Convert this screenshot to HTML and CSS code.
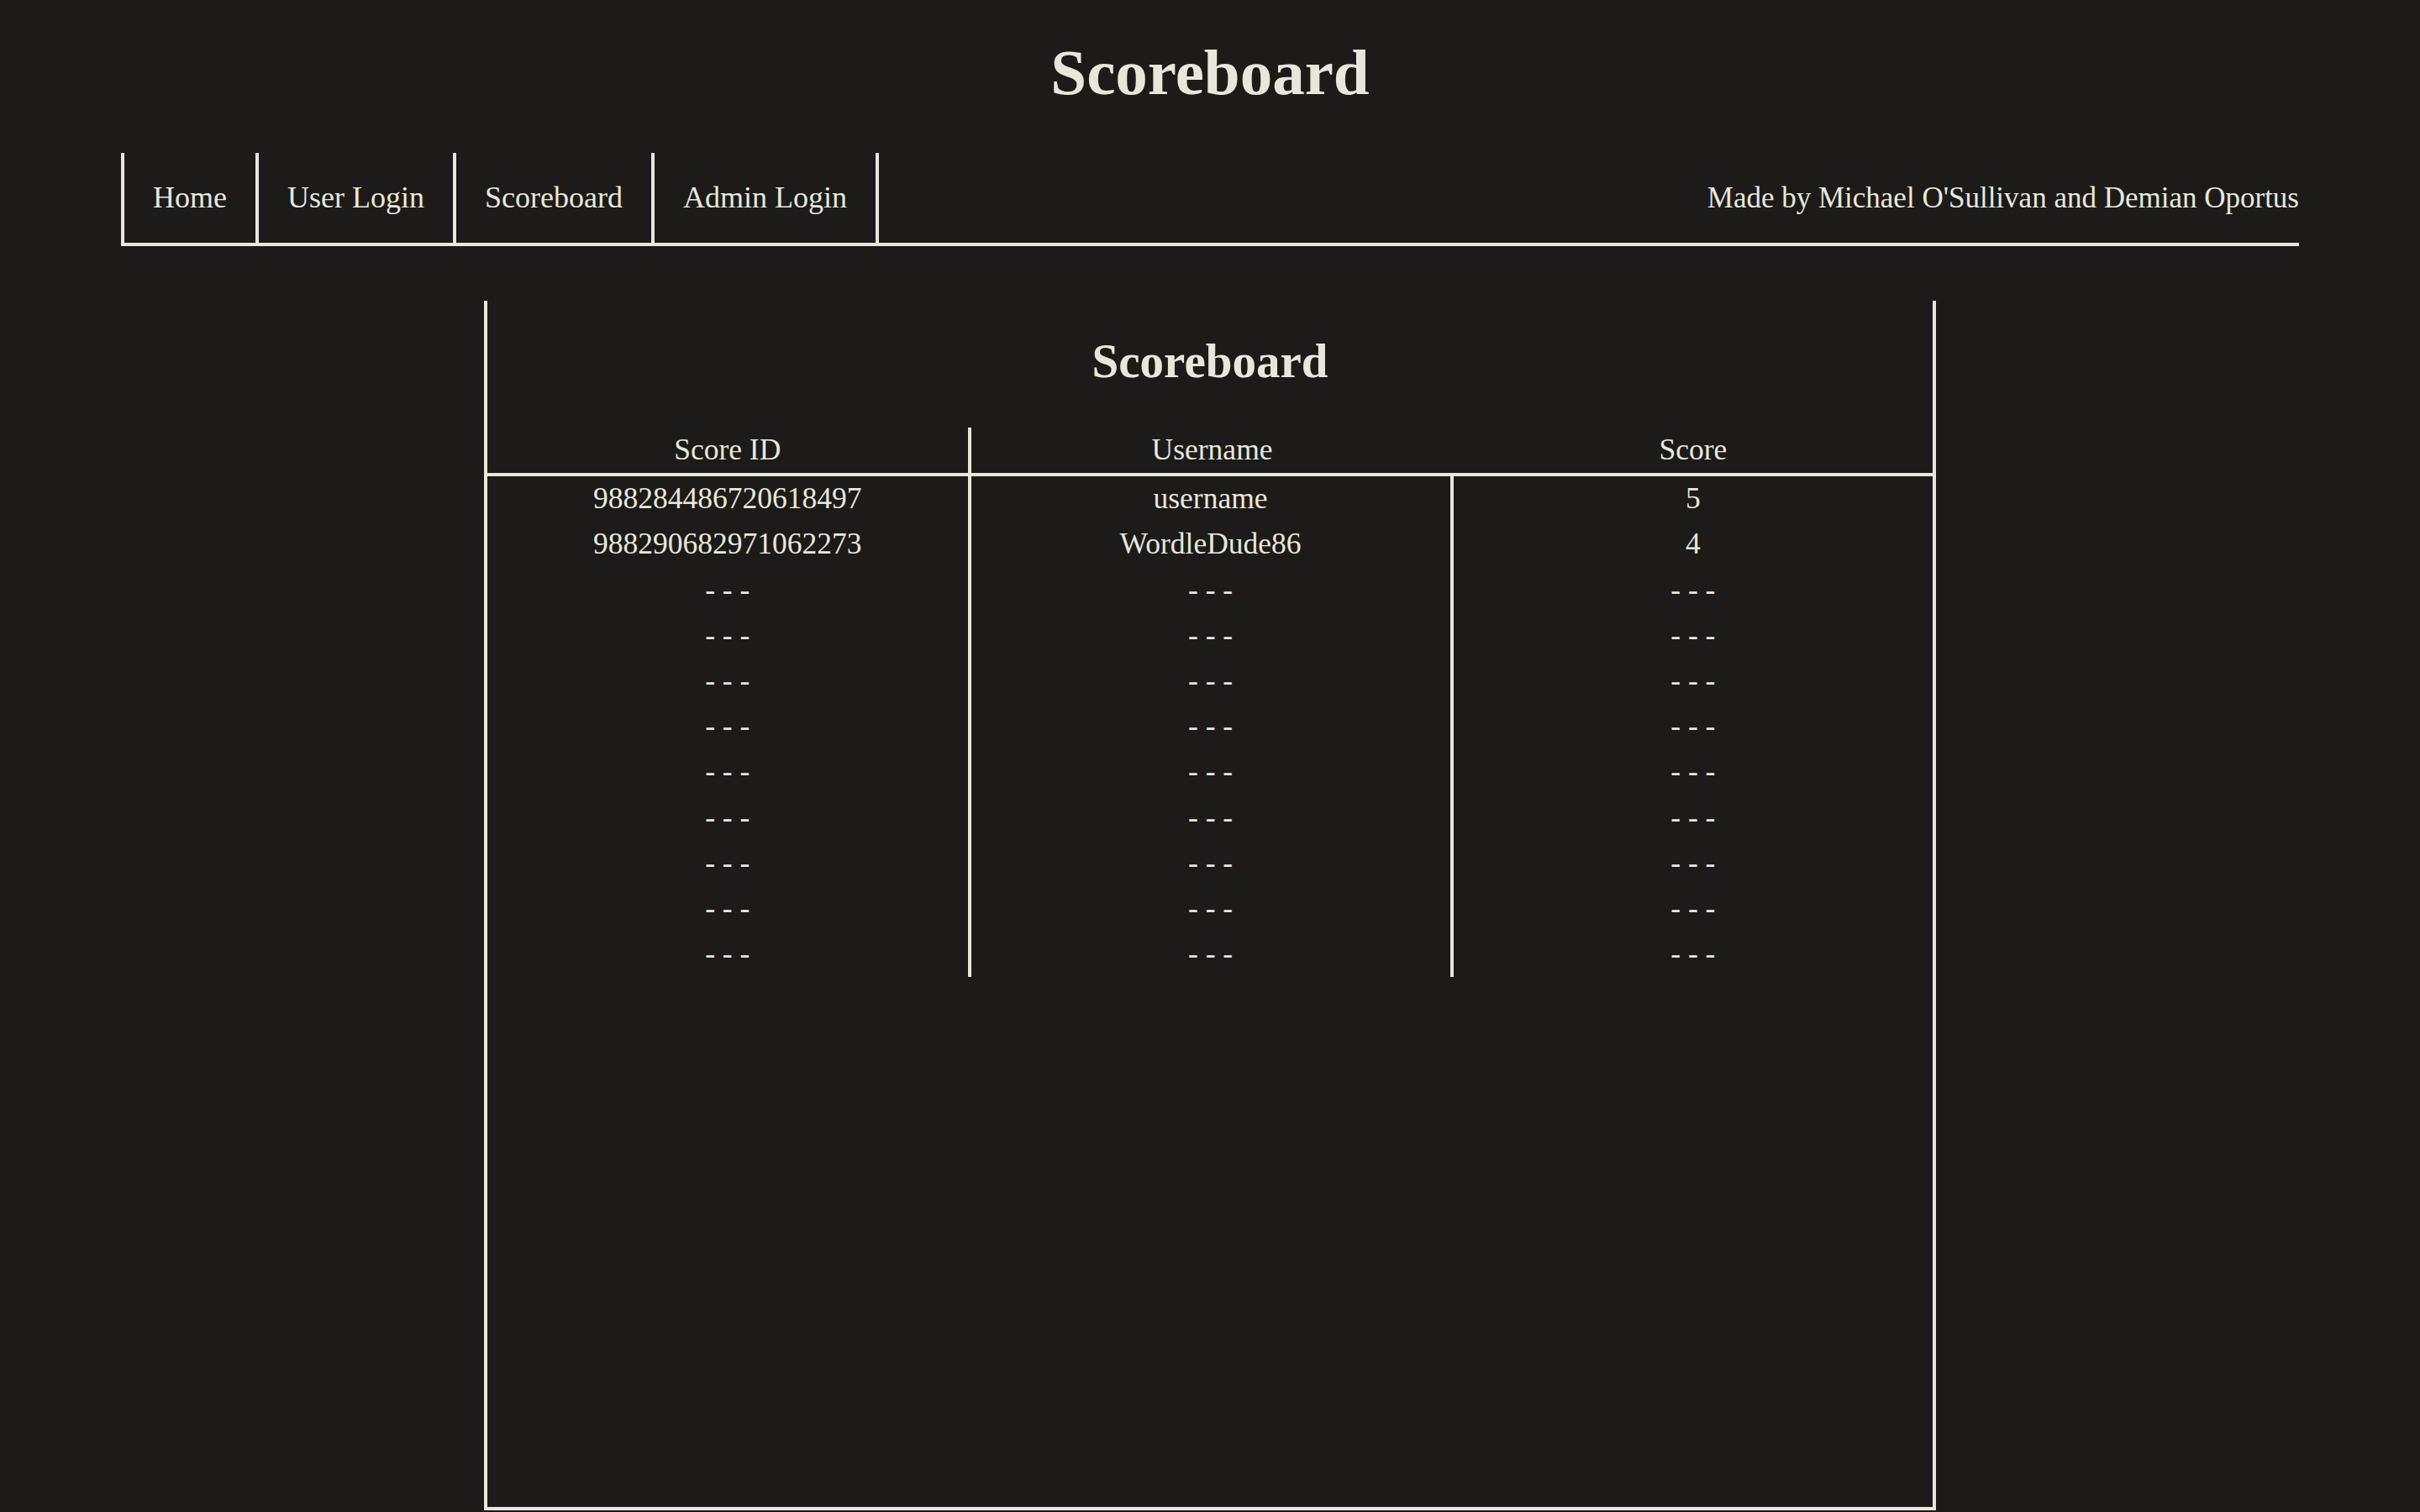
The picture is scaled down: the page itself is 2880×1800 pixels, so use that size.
FILE: index.html
```html
<!DOCTYPE html>
<html lang="en">
<head>
<meta charset="utf-8">
<title>Scoreboard</title>
<link rel="stylesheet" href="styles.css">
</head>
<body>
<h1 class="page-title">Scoreboard</h1>
<nav class="nav">
  <ul class="nav-links">
    <li><a href="#">Home</a></li>
    <li><a href="#">User Login</a></li>
    <li><a href="#">Scoreboard</a></li>
    <li><a href="#">Admin Login</a></li>
  </ul>
  <span class="credit">Made by Michael O'Sullivan and Demian Oportus</span>
</nav>
<main class="card">
  <h2 class="card-title">Scoreboard</h2>
  <table class="scores">
    <colgroup>
      <col class="col-id">
      <col class="col-user">
      <col class="col-score">
    </colgroup>
    <thead>
      <tr><th>Score ID</th><th>Username</th><th>Score</th></tr>
    </thead>
    <tbody>
      <tr><td>988284486720618497</td><td>username</td><td>5</td></tr>
      <tr><td>988290682971062273</td><td>WordleDude86</td><td>4</td></tr>
      <tr><td>- - -</td><td>- - -</td><td>- - -</td></tr>
      <tr><td>- - -</td><td>- - -</td><td>- - -</td></tr>
      <tr><td>- - -</td><td>- - -</td><td>- - -</td></tr>
      <tr><td>- - -</td><td>- - -</td><td>- - -</td></tr>
      <tr><td>- - -</td><td>- - -</td><td>- - -</td></tr>
      <tr><td>- - -</td><td>- - -</td><td>- - -</td></tr>
      <tr><td>- - -</td><td>- - -</td><td>- - -</td></tr>
      <tr><td>- - -</td><td>- - -</td><td>- - -</td></tr>
      <tr><td>- - -</td><td>- - -</td><td>- - -</td></tr>
    </tbody>
  </table>
</main>
</body>
</html>
```
FILE: styles.css
```css
html, body {
  margin: 0;
  padding: 0;
}

body {
  background: #1c1b19;
  color: #e8e7dc;
  font-family: "Liberation Serif", "DejaVu Serif", serif;
}

.page-title {
  margin: 48px 0 0;
  font-size: 77px;
  line-height: 77px;
  font-weight: bold;
  text-align: center;
}

.nav {
  display: flex;
  align-items: center;
  margin: 57px 5% 0;
  border-bottom: 4px solid #e8e7dc;
}

.nav-links {
  display: flex;
  list-style: none;
  margin: 0;
  padding: 0;
  border-left: 4px solid #e8e7dc;
}

.nav-links a {
  display: block;
  padding: 34px;
  border-right: 4px solid #e8e7dc;
  color: inherit;
  text-decoration: none;
  font-size: 36px;
  line-height: 39px;
}

.credit {
  margin-left: auto;
  font-size: 35px;
  line-height: 39px;
}

.card {
  display: flow-root;
  box-sizing: border-box;
  width: 60%;
  height: 80vh;
  margin: 65px auto 0;
  border: 4px solid #e8e7dc;
  border-top: none;
}

.card-title {
  margin: 43px 0 51px;
  font-size: 57px;
  line-height: 57px;
  font-weight: bold;
  text-align: center;
}

.scores {
  width: 100%;
  table-layout: fixed;
  border-collapse: separate;
  border-spacing: 0;
  font-size: 35.5px;
}

.col-id {
  width: 33.46%;
}

.col-user {
  width: 33.38%;
}

.scores th,
.scores td {
  padding: 0 0 2px;
  line-height: 52.2px;
  text-align: center;
  font-weight: normal;
  white-space: nowrap;
}

.scores th {
  border-bottom: 4px solid #e8e7dc;
}

.scores th:first-child,
.scores td:nth-child(1),
.scores td:nth-child(2) {
  border-right: 4px solid #e8e7dc;
}
```
